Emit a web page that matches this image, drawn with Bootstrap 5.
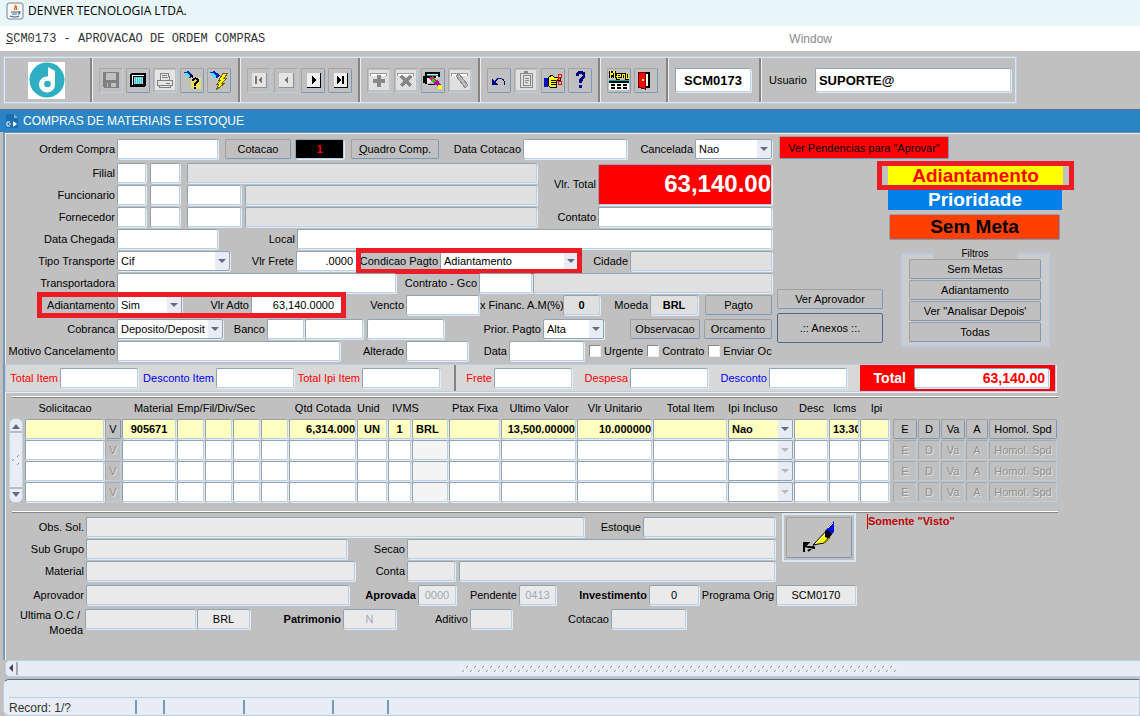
<!DOCTYPE html>
<html lang="pt-BR">
<head>
<meta charset="utf-8">
<meta name="viewport" content="width=device-width, initial-scale=1">
<title>DENVER TECNOLOGIA LTDA.</title>
<link href="https://cdn.jsdelivr.net/npm/bootstrap@5.3.0/dist/css/bootstrap.min.css" rel="stylesheet">
<style>
body{background:#c0c0c0;color:#000;font:11px/14px "Liberation Sans",Arial,sans-serif}
/* window chrome */
.titlebar{height:26px;background:#e8f6f8;padding:0 6px 4px;font:12px/18px "Open Sans","Noto Sans",sans-serif}
.menubar{height:25px;background:#fff;padding:0 6px;font:12px/16px "Liberation Mono",monospace;color:#333}
.menubar a{color:inherit;text-decoration:none}
.menubar .win{font:12px/16px "Liberation Sans",sans-serif;color:#8a8a8a;margin-right:302px}
.toolzone{padding:5px 3px;width:100%;max-width:1020px}
.toolbox{height:48px;border:1px solid #b8cfe5;outline:1px solid #dce6f0;outline-offset:-2px}
.sect{display:flex;align-items:center;gap:3px;border-right:2px solid #848484;box-shadow:1px 0 #eee;padding-left:7px;flex:none}
.s-logo{width:88px;padding-left:24px}.s-five{width:148px}.s-four{width:120px}.s-two{width:68px}.s-code{width:93px}
.tool{width:24px;height:25px;padding:1px;background:#c0c0c0;border:1px solid;border-color:#a3a3a3 #7a99b8 #7a99b8 #a3a3a3;border-radius:2px;display:flex;align-items:center;justify-content:center}
.tool:disabled{border-color:#aaa #b8cfe5 #b8cfe5 #aaa}
.tool svg{width:20px;height:20px;shape-rendering:crispEdges}
.formtitle{height:23px;background:#2b84c4;border-top:1px solid #50708c;color:#fff;font-size:12px;padding:0 5px}
/* canvas */
.canvas{border-left:2px solid #7a99b8;border-top:1px solid #7089a4;box-shadow:inset 1px 1px #eef3f8;margin-left:3px}
.upper{display:grid;grid-template-columns:minmax(0,1fr) 301px;width:100%;max-width:1069px;padding-top:5px}
.lower{width:100%;max-width:1053px}
.line{display:grid;align-items:center;height:22px}
.push{margin-bottom:2px}
.lb{text-align:right;padding-right:2px;white-space:nowrap;overflow:hidden;min-width:0}
.fld,.sel{min-width:0;width:auto;height:20px;padding:0 3px;font:inherit;color:#000;background-color:#fff;border:1px solid;border-color:#93a1b0 #b8cfe5 #b8cfe5 #93a1b0;border-radius:2px;box-shadow:1px 1px #e4edf6;margin-right:1px}
.fld:focus,.sel:focus{box-shadow:0 0 0 1px #39f;background-color:#fff}
.fld.off{background-color:#e0e0e0}.lower .fld.off{background-color:#eaeaea}.fld.dim{color:#9aabbd}
.fld.big{height:24px;font-size:13px;font-weight:700}
.sel{border-right-color:#93a1b0;border-bottom-color:#93a1b0;padding-right:14px;background:#fff right/14px 18px no-repeat;background-image:url("data:image/svg+xml,%3Csvg xmlns='http://www.w3.org/2000/svg' width='14' height='18'%3E%3Cpath fill='%23e8edf5' d='M0 0h14v18H0z'/%3E%3Cpath fill='%23646c80' d='M3 7h8l-4 4z'/%3E%3C/svg%3E")}
.sel:disabled{background-color:#fff;background-image:url("data:image/svg+xml,%3Csvg xmlns='http://www.w3.org/2000/svg' width='14' height='18'%3E%3Cpath fill='%23e8edf5' d='M0 0h14v18H0z'/%3E%3Cpath fill='%23b4b8c0' d='M3 7h8l-4 4z'/%3E%3C/svg%3E")}
.num{text-align:right}.mid{text-align:center}.strong{font-weight:700}
.key{height:20px;min-width:0;padding:0 1px;font:inherit;color:#000;background:#c0c0c0;border:1px solid;border-color:#a0a0a0 #7a99b8 #7a99b8 #a0a0a0;border-radius:2px;white-space:nowrap;margin-right:1px}
.key:disabled{color:#909090;text-shadow:1px 1px #e4e4e4;border-color:#a8a8a8 #b8cfe5 #b8cfe5 #a8a8a8}
.g3{margin-left:3px}.g6{margin-left:6px}.g24{margin-left:25px}
.l-order{grid-template-columns:112px minmax(0,1fr) 73px 53px 95px 83px 105px 67px 78px}
.pair{display:grid;grid-template-columns:minmax(0,1fr) 60px 175px;align-items:center}
.l-branch{grid-template-columns:112px 30px 34px minmax(0,1fr)}
.l-person{grid-template-columns:112px 30px 34px 61px minmax(0,1fr)}
.l-arrive{grid-template-columns:112px 102px 78px minmax(0,1fr)}
.l-type{grid-template-columns:112px 114px 65px 62px minmax(0,1fr) 50px 143px}
.l-carrier{grid-template-columns:112px minmax(0,1fr) 82px 54px 240px}
.l-advance{grid-template-columns:339px 62px 74px 83px 38px 49px 49px minmax(0,1fr)}
.l-billing{grid-template-columns:112px 107px 43px 38px 59px 81px 98px 62px 96px minmax(0,1fr)}
.l-reason{grid-template-columns:112px minmax(0,1fr) 65px 63px 40px 76px 188px}
.hot{display:grid;align-items:center;height:22px;outline:5px solid #ed1c24;outline-offset:-3px}
.hot-pay{grid-template-columns:82px minmax(0,1fr)}
.hot-adv{grid-template-columns:78px 66px 68px minmax(0,1fr);margin-left:34px}
.fld.sum{height:41px;background:#f00;color:#fff;font-size:24px;font-weight:700;padding:0}
.fld.lot{background:#000;color:#f00;font-weight:700}
.chk{appearance:none;width:12px;height:12px;margin:0 3px 0 0;background:#fff;border:1px solid;border-color:#888 #eee #eee #888;flex:none}
.chk:checked{background:#345}
/* right column */
.alerts{margin-left:104px;width:197px}
.flag{width:174px;margin-left:11px;text-align:center;font-size:19px;font-weight:700;line-height:20px;height:20px}
.prio{background:#0080e8;color:#fff}
.ring{border:5px solid #ed1c24;padding:0 6px;height:29px}
.ring .flag{margin:0;width:auto;background:#ff0;color:#f00;height:19px}
.nogoal{display:block;width:171px;height:26px;margin:4px 0 0 12px;font-size:19px;font-weight:700;background:#ff4000}
.pend{width:170px;height:23px;margin:-2px 0 2px 6px;background:#f00}
.sidekeys{width:107px;margin:49px 17px 0 4px}
.sidekeys .tall{height:30px;border-color:#4c6a94}
.filters{width:149px;height:98px;margin-top:9px;padding:0 9px 0 6px;background:#ccc;border:2px solid #bccbdc;border-radius:3px}
.filters legend{float:none;width:84px;margin:0 0 0 1px;padding:0;background:#c0c0c0;font-size:10px;line-height:10px;text-align:center}
.filters .key{display:block;width:132px;margin:0 0 1px;height:20px}
/* totals */
.totals{display:grid;grid-template-columns:54px minmax(0,1fr) 77px minmax(0,1fr) 67px minmax(0,1fr) 53px minmax(0,1fr) 57px minmax(0,1fr) 60px minmax(0,1fr) 207px;align-items:center;max-width:1051px;height:28px;margin-top:2px;border:1px solid #b8cfe5;background:#d8d8d8;box-shadow:1px 1px #e4edf6}
.totals .sep{border-left:2px solid #848484;margin-left:13px;line-height:26px}
.red{color:#f00}.blue{color:#00f}
.grand{height:26px;margin-left:12px;padding:0 5px 0 0;background:#f00;color:#fff;display:grid;grid-template-columns:54px minmax(0,1fr);align-items:center;font-size:14px;font-weight:700}
.grand .lb{padding-right:8px}.grand .fld{color:#f00}
.rule{height:2px;background:#848484;border-top:1px solid #fff;margin-left:7px}
/* item grid */
.items{table-layout:fixed;width:100%;border-collapse:collapse}
.items th{font-weight:400;text-align:center;height:20px;padding:0;white-space:nowrap}
.items td{padding:0 1px 0 0;height:21px}
.items .fld,.items .sel,.items .key{width:100%;display:block;margin:0}
.items .live .fld,.items .live .sel{background-color:#ffffc0;font-weight:700}
.items .cur{background-color:#f4f4f4}
.items td.wide{padding-right:4px}
.c-v{width:17px}.c-mat{width:55px}.c-org{width:28px}.c-qty{width:68px}.c-un{width:31px}.c-iv{width:24px}.c-cur{width:37px}.c-ptax{width:52px}.c-val{width:76px}.c-tot{width:75px}.c-inc{width:66px}.c-desc{width:35px}.c-ipi{width:33px}.c-key{width:25px}.c-kn{width:23px}.c-hom{width:69px}
.vbar{width:14px;height:85px;margin:20px 2px 0 4px;background:#e8edf5;border:1px solid #b8cfe5;border-radius:6px;flex:none}
.vbar svg{display:block;width:12px;height:83px}
/* details */
.det{display:grid;grid-template-columns:771px 80px minmax(0,1fr)}
.detrows{padding-top:3px}
.d-obs{grid-template-columns:81px minmax(0,1fr) 58px 133px}
.d-sub{grid-template-columns:81px 262px 59px minmax(0,1fr)}
.d-mat{grid-template-columns:81px 270px 51px 49px minmax(0,1fr)}
.d-apr{grid-template-columns:81px 264px 68px 39px 62px 38px 92px 51px 76px 81px;margin-top:2px}
.d-ult{grid-template-columns:80px 112px 54px 92px 54px 73px 43px 98px 76px;grid-template-rows:22px}
.ult{line-height:15px;height:30px;align-self:start}
.signbox{width:74px;height:49px;border:2px solid #dce7f2;margin:0 0 0 6px;padding:2px}
.signbox .key{width:100%;height:41px;margin:0}
.visto{color:#c00000;font-weight:700;border-left:1px solid #c00000;margin:1px 0 0 11px;height:15px}
.hbar{height:17px;margin:0 0 2px 5px;background:#e8edf5;border:1px solid #b8cfe5;border-right:0;border-radius:5px 0 0 5px}
.hbar .arrow{width:14px;height:15px;flex:none}
.hbar .grip{width:436px;height:8px;margin-left:39%}
.status{height:37px;background:#e8edf5;border:1px solid #b8cfe5;border-top:1px solid #50708c;border-radius:6px 0 0 6px;margin-left:3px;padding:17px 0 0 5px;font-size:12px;color:#333}
.status div{border-top:1px solid #b8cfe5}
.status i{border-left:2px solid #7a99b8;height:14px;margin-top:2px}
.st1{width:126px;padding-top:3px}.st2{width:28px}.st3{width:80px}.st4{width:89px}.st5{width:55px}
</style>
</head>
<body class="d-flex flex-column min-vh-100">
<header>
  <div class="titlebar d-flex align-items-center gap-1">
    <svg width="18" height="18" viewBox="0 0 18 18"><rect x="1" y="1" width="16" height="16" rx="2" fill="#f7f7f7" stroke="#77828c"/><path d="M9 3c2 2-2 3 0 5M11 4c-2 2 1 2-1 4" stroke="#e8731a" stroke-width="1.4" fill="none"/><path d="M5 10h7M6 12h5M12 10c3-1 2 2 0 2M4 14q5 2 9 0" stroke="#38658c" stroke-width="1.2" fill="none"/></svg>
    <span>DENVER TECNOLOGIA LTDA.</span>
  </div>
  <nav class="menubar d-flex align-items-center justify-content-between">
    <a href="#"><u>S</u>CM0173 - APROVACAO DE ORDEM COMPRAS</a><a href="#" class="win">Window</a>
  </nav>
</header>

<div class="toolzone">
  <div class="toolbox d-flex">
    <div class="sect s-logo"><svg width="37" height="37" viewBox="0 0 37 37"><path fill="#fff" d="M0 0h37v37H0z"/><circle cx="19" cy="18" r="17.500" fill="#2fafc2"/><path d="M20 5l7 4v13.500a8 8 0 1 1-7-7.900z" fill="#fff"/><circle cx="19.500" cy="22" r="3.300" fill="#2fafc2"/></svg></div>
    <div class="sect s-five">
      <button class="tool" disabled aria-label="Salvar"><svg viewBox="0 0 20 20"><path fill="#808080" d="M2 2h15l1 1v15H3l-1-1z"/><path fill="#c0c0c0" d="M5 3h10v7H5zM6 13h9v4H6z"/><path fill="#808080" d="M7 13h3v4H7z"/></svg></button>
      <button class="tool" aria-label="Tela"><svg viewBox="0 0 20 20"><rect x="3" y="4" width="14" height="12" rx="1" fill="#fff" stroke="#000" stroke-width="2"/><path d="M5 6h10v8H5z" fill="#9be6ea" stroke="#000"/><path d="M7 7v7M9 7v7M11 7v7M13 7v7" stroke="#39c4d0"/></svg></button>
      <button class="tool" disabled aria-label="Imprimir"><svg viewBox="0 0 20 20"><path fill="#e4e4e4" d="M0 0h20v20H0z"/><path d="M5 10V3h8l2 7M2 10h15v5H2zM4 15v2h11v-2M7 5h5M7 7h6M11 13h4" fill="none" stroke="#808080"/></svg></button>
      <button class="tool" aria-label="Consultar"><svg viewBox="0 0 20 20"><path d="M1 3l5-2 5 4-3 3z" fill="#0020c0"/><path d="M2 3l4 5 3-2-4-3z" fill="#40e8ff"/><path d="M8 5l3 2" stroke="#000" stroke-width="2"/><path d="M9 8h10v11H9z" fill="#e8e060"/><path d="M11 11c0-4 6-3 5 0l-3 3v2M13 17v2" fill="none" stroke="#000" stroke-width="2"/></svg></button>
      <button class="tool" aria-label="Executar consulta"><svg viewBox="0 0 20 20"><path d="M0 3l5-2 6 4-3 3z" fill="#0020c0"/><path d="M1 3l4 5 3-2-4-3z" fill="#40e8ff"/><path d="M14 3h5l-4 5h3l-5 5h3l-9 7 3-6H8l4-4h-2z" fill="#ff0" stroke="#706000"/></svg></button>
    </div>
    <div class="sect s-four">
      <button class="tool" disabled aria-label="Primeiro"><svg viewBox="0 0 20 20"><path fill="#e4e4e4" d="M3 3h14v14H3z"/><path d="M3 17h14V3" fill="none" stroke="#909090"/><path d="M6 6h2v8H6zM13 6v8l-4-4z" fill="#777"/></svg></button>
      <button class="tool" disabled aria-label="Anterior"><svg viewBox="0 0 20 20"><path fill="#e4e4e4" d="M3 3h14v14H3z"/><path d="M3 17h14V3" fill="none" stroke="#909090"/><path d="M12 6v8l-4-4z" fill="#777"/></svg></button>
      <button class="tool" aria-label="Proximo"><svg viewBox="0 0 20 20"><path fill="#eee" d="M4 3h13v14H4z"/><path d="M4 17h13V3" fill="none" stroke="#000"/><path d="M9 6v8l4-4z"/></svg></button>
      <button class="tool" aria-label="Ultimo"><svg viewBox="0 0 20 20"><path fill="#eee" d="M4 3h13v14H4z"/><path d="M4 17h13V3" fill="none" stroke="#000"/><path d="M7 6v8l4-4zM12 6h2v8h-2z"/></svg></button>
    </div>
    <div class="sect s-four">
      <button class="tool" disabled aria-label="Inserir"><svg viewBox="0 0 20 20"><path fill="#e0e0e0" d="M0 0h20v20H0z"/><path d="M1 6V3h16v3" fill="#fff" stroke="#999"/><path d="M8 5h4v4h4v4h-4v4H8v-4H4V9h4z" fill="#888"/></svg></button>
      <button class="tool" disabled aria-label="Remover"><svg viewBox="0 0 20 20"><path fill="#e0e0e0" d="M0 0h20v20H0z"/><path d="M1 6V3h16v3" fill="#fff" stroke="#999"/><path d="M5 6l10 10M15 6L5 16" stroke="#888" stroke-width="3"/></svg></button>
      <button class="tool" aria-label="Limpar"><svg viewBox="0 0 20 20"><path d="M3 14V3h13v4M1 13V7h12" fill="#e8e8e8" stroke="#000" stroke-width="2"/><path d="M4 5h11" stroke="#0aa"/><path d="M5 14h9" stroke="#000"/><path d="M6 8l4-2 5 6-3 3z" fill="#f02060"/><path d="M9 9h3v3H9z" fill="#0d0"/><path d="M11 13l4-3 3 5-3 2z" fill="#a000a0"/><path d="M15 15h4v4h-4z" fill="#ff0"/></svg></button>
      <button class="tool" disabled aria-label="Apagar"><svg viewBox="0 0 20 20"><path fill="#e0e0e0" d="M0 0h20v20H0z"/><path d="M1 6V3h16v3" fill="#fff" stroke="#999"/><path d="M6 6l3-2 9 11-3 3z" fill="#bbb" stroke="#888"/></svg></button>
    </div>
    <div class="sect s-four">
      <button class="tool" aria-label="Desfazer"><svg viewBox="0 0 20 20"><path d="M6 12c3-6 11-4 9 3" fill="none" stroke="#000080"/><path d="M3 9v6h6z" fill="#000080"/></svg></button>
      <button class="tool" disabled aria-label="Colar"><svg viewBox="0 0 20 20"><path fill="#e0e0e0" d="M0 0h20v20H0z"/><path d="M4 3h12v14H4zM7 5h7v10H7zM9 8h4M9 10h4M9 12h3" fill="none" stroke="#888"/><path d="M8 1h4v3H8z" fill="#888"/></svg></button>
      <button class="tool" aria-label="Recortar"><svg viewBox="0 0 20 20"><path d="M1 8h4v9H1z" fill="#0010c0"/><path d="M5 8l4-3 2 2h6v3h-4v7H7l-2-2z" fill="#ff0" stroke="#000"/><path d="M8 10h6M8 12h5M8 14h5" stroke="#000"/><circle cx="17" cy="6" r="2" fill="none" stroke="#f00"/><circle cx="17" cy="13" r="2" fill="none" stroke="#f00"/><path d="M13 11l4-3" stroke="#f00"/></svg></button>
      <button class="tool" aria-label="Ajuda"><svg viewBox="0 0 20 20"><path d="M7 6c0-5 8-5 7 0 0 3-4 2-4 7M10 15v3" fill="none" stroke="#000080" stroke-width="3"/></svg></button>
    </div>
    <div class="sect s-two">
      <button class="tool" aria-label="Menu"><svg viewBox="0 0 20 20"><path d="M0 10h20v10H0z" fill="#fff"/><path d="M0 10h20" stroke="#0aa" stroke-width="1"/><path d="M0 12h20M2 15h4M8 15h4M14 15h4M2 18h4M8 18h4M14 18h4" stroke="#000" stroke-width="2"/><path d="M1 8V1l2 4 2-4v7M7 6h4V4H8v4h3M13 8V4h2v4M17 4v4h2V4" fill="none" stroke="#000" stroke-width="3"/><path d="M1 8V1l2 4 2-4v7M7 6h4V4H8v4h3M13 8V4h2v4M17 4v4h2V4" fill="none" stroke="#ff0"/></svg></button>
      <button class="tool" aria-label="Sair"><svg viewBox="0 0 20 20"><path d="M3 3h10v14H3z" fill="#fff" stroke="#000" stroke-width="2"/><path d="M2 2h7v17l-7-2z" fill="#f00" stroke="#600"/><path d="M6 9h2v2H6z" fill="#ff0"/></svg></button>
    </div>
    <div class="sect s-code"><input class="fld big mid w-100 me-2" value="SCM0173" aria-label="Programa"></div>
    <div class="d-flex align-items-center flex-grow-1 ps-1 pe-1">
      <label for="usr" class="ms-1 me-2">Usuario</label><input id="usr" class="fld big flex-grow-1" value="SUPORTE@">
    </div>
  </div>
</div>

<div class="formtitle d-flex align-items-center gap-1">
  <svg width="14" height="16" viewBox="0 0 14 16"><path d="M1 1h8l4 4v10H1z" fill="#1b6fae"/><path d="M9 1l4 4H9z" fill="#79b4dc"/><path d="M5 9H2v4h3M4 11h2" stroke="#fff" fill="none"/><path d="M8 8l4 3-4 3z" fill="#fff"/></svg>
  <span>COMPRAS DE MATERIAIS E ESTOQUE</span>
</div>

<main class="canvas flex-grow-1 d-flex flex-column">
<div class="upper">
  <div>
    <div class="line l-order push">
      <label class="lb" for="oc">Ordem Compra</label><input id="oc" class="fld">
      <button class="key g6">Cotacao</button><input class="fld lot mid g3" value="1" aria-label="Numero da cotacao">
      <button class="key g6"><u>Q</u>uadro Comp.</button>
      <label class="lb" for="dc">Data Cotacao</label><input id="dc" class="fld">
      <label class="lb" for="cn">Cancelada</label><select id="cn" class="form-select sel"><option>Nao</option></select>
    </div>
    <div class="pair">
      <div>
        <div class="line l-branch"><label class="lb" for="fi">Filial</label><input id="fi" class="fld"><input class="fld g3" aria-label="Filial 2"><input class="fld off g6" readonly aria-label="Nome filial"></div>
        <div class="line l-person"><label class="lb" for="fu">Funcionario</label><input id="fu" class="fld"><input class="fld g3" aria-label="Funcionario 2"><input class="fld g6" aria-label="Funcionario 3"><input class="fld off g3" readonly aria-label="Nome funcionario"></div>
      </div>
      <label class="lb" for="vt">Vlr. Total</label><input id="vt" class="fld sum num" value="63,140.00">
    </div>
    <div class="pair">
      <div class="line l-person"><label class="lb" for="fo">Fornecedor</label><input id="fo" class="fld"><input class="fld g3" aria-label="Fornecedor 2"><input class="fld g6" aria-label="Fornecedor 3"><input class="fld off g3" readonly aria-label="Nome fornecedor"></div>
      <label class="lb" for="ct">Contato</label><input id="ct" class="fld">
    </div>
    <div class="line l-arrive"><label class="lb" for="dg">Data Chegada</label><input id="dg" class="fld"><label class="lb" for="lo">Local</label><input id="lo" class="fld"></div>
    <div class="line l-type">
      <label class="lb" for="tt">Tipo Transporte</label><select id="tt" class="form-select sel"><option>Cif</option></select>
      <label class="lb" for="vf">Vlr Frete</label><input id="vf" class="fld num" value=".0000">
      <div class="hot hot-pay"><label class="lb" for="cp">Condicao Pagto</label><select id="cp" class="form-select sel"><option>Adiantamento</option></select></div>
      <label class="lb" for="ci">Cidade</label><input id="ci" class="fld off" readonly>
    </div>
    <div class="line l-carrier"><label class="lb" for="tr">Transportadora</label><input id="tr" class="fld"><label class="lb" for="cg">Contrato - Gco</label><input id="cg" class="fld"><input class="fld off" readonly aria-label="Descricao contrato"></div>
    <div class="line l-advance push">
      <div class="hot hot-adv"><label class="lb" for="ad">Adiantamento</label><select id="ad" class="form-select sel"><option>Sim</option></select><label class="lb" for="va">Vlr Adto</label><input id="va" class="fld num pe-2" value="63,140.0000"></div>
      <label class="lb" for="ve">Vencto</label><input id="ve" class="fld">
      <label class="lb" for="tx">x Financ. A.M(%)</label><input id="tx" class="fld off mid strong" value="0">
      <label class="lb" for="mo">Moeda</label><input id="mo" class="fld off mid strong" value="BRL"><button class="key g6">Pagto</button>
    </div>
    <div class="line l-billing">
      <label class="lb" for="co">Cobranca</label><select id="co" class="form-select sel"><option>Deposito/Deposit</option></select>
      <label class="lb" for="ba">Banco</label><input id="ba" class="fld"><input class="fld" aria-label="Agencia"><input class="fld g3" aria-label="Conta corrente">
      <label class="lb" for="pp">Prior. Pagto</label><select id="pp" class="form-select sel"><option>Alta</option></select>
      <button class="key g24">Observacao</button><button class="key g3">Orcamento</button>
    </div>
    <div class="line l-reason">
      <label class="lb" for="mc">Motivo Cancelamento</label><input id="mc" class="fld"><label class="lb" for="al">Alterado</label><input id="al" class="fld"><label class="lb" for="da">Data</label><input id="da" class="fld">
      <div class="d-flex align-items-center ps-1 text-nowrap"><input type="checkbox" class="chk" id="k1"><label for="k1" class="me-1">Urgente</label><input type="checkbox" class="chk" id="k2"><label for="k2" class="me-1">Contrato</label><input type="checkbox" class="chk" id="k3"><label for="k3">Enviar Oc</label></div>
    </div>
  </div>
  <div>
    <button class="key pend">Ver Pendencias para "Aprovar"</button>
    <div class="alerts">
      <div class="ring"><div class="flag">Adiantamento</div></div>
      <div class="flag prio">Prioridade</div>
      <button class="key nogoal">Sem Meta</button>
    </div>
    <div class="d-flex">
      <div class="sidekeys d-flex flex-column gap-1"><button class="key">Ver Aprovador</button><button class="key tall">.:: Anexos ::.</button></div>
      <fieldset class="filters"><legend>Filtros</legend><button class="key">Sem Metas</button><button class="key">Adiantamento</button><button class="key">Ver "Analisar Depois'</button><button class="key">Todas</button></fieldset>
    </div>
  </div>
</div>

<div class="lower">
  <div class="totals">
    <label class="lb red" for="t1">Total Item</label><input id="t1" class="fld"><label class="lb blue" for="t2">Desconto Item</label><input id="t2" class="fld"><label class="lb red" for="t3">Total Ipi Item</label><input id="t3" class="fld">
    <label class="lb red sep" for="t4">Frete</label><input id="t4" class="fld"><label class="lb red" for="t5">Despesa</label><input id="t5" class="fld"><label class="lb blue" for="t6">Desconto</label><input id="t6" class="fld">
    <div class="grand"><label class="lb" for="t7">Total</label><input id="t7" class="fld num" value="63,140.00"></div>
  </div>
  <div class="rule mt-1"></div>
  <div class="d-flex">
    <div class="vbar"><svg viewBox="0 0 12 83"><path d="M2 10h8L6 5zM2 73h8l-4 5z" fill="#646c80"/><path d="M0 13h12M0 69h12" stroke="#888"/><path d="M2 42l2-2M7 38l2-2M7 46l2-2" stroke="#7a99b8"/></svg></div>
    <table class="items">
      <colgroup><col><col class="c-v"><col class="c-mat"><col class="c-org" span="4"><col class="c-qty"><col class="c-un"><col class="c-iv"><col class="c-cur"><col class="c-ptax"><col class="c-val" span="2"><col class="c-tot"><col class="c-inc"><col class="c-desc"><col class="c-un"><col class="c-ipi"><col class="c-key"><col class="c-kn"><col class="c-key"><col class="c-kn"><col class="c-hom"></colgroup>
      <thead><tr><th>Solicitacao</th><th></th><th class="text-end pe-1">Material</th><th colspan="4" class="text-start">Emp/Fil/Div/Sec</th><th>Qtd Cotada</th><th class="text-start">Unid</th><th colspan="2" class="text-start ps-1">IVMS</th><th>Ptax Fixa</th><th>Ultimo Valor</th><th>Vlr Unitario</th><th>Total Item</th><th class="text-start">Ipi Incluso</th><th>Desc</th><th class="text-start ps-1">Icms</th><th>Ipi</th><th colspan="5"></th></tr></thead>
      <tbody>
      <tr class="live"><td><input class="fld" aria-label="Solicitacao"></td><td><button class="key">V</button></td><td><input class="fld mid" value="905671" aria-label="Material"></td><td><input class="fld" aria-label="Emp"></td><td><input class="fld" aria-label="Fil"></td><td><input class="fld" aria-label="Div"></td><td><input class="fld" aria-label="Sec"></td><td><input class="fld num px-0" value="6,314.000" aria-label="Qtd"></td><td><input class="fld mid" value="UN" aria-label="Unid"></td><td><input class="fld mid" value="1" aria-label="IVMS"></td><td><input class="fld" value="BRL" aria-label="Moeda"></td><td><input class="fld" aria-label="Ptax"></td><td><input class="fld num px-0" value="13,500.00000" aria-label="Ultimo Valor"></td><td><input class="fld num px-0" value="10.000000" aria-label="Vlr Unitario"></td><td><input class="fld" aria-label="Total"></td><td><select class="form-select sel" aria-label="Ipi Incluso"><option>Nao</option></select></td><td><input class="fld" aria-label="Desc"></td><td><input class="fld pe-0" value="13.3000" aria-label="Icms"></td><td class="wide"><input class="fld" aria-label="Ipi"></td><td><button class="key">E</button></td><td><button class="key">D</button></td><td><button class="key">Va</button></td><td><button class="key">A</button></td><td><button class="key">Homol. Spd</button></td></tr>
      <tr><td><input class="fld" aria-label="Solicitacao"></td><td><button class="key" disabled>V</button></td><td><input class="fld" aria-label="Material"></td><td><input class="fld" aria-label="Emp"></td><td><input class="fld" aria-label="Fil"></td><td><input class="fld" aria-label="Div"></td><td><input class="fld" aria-label="Sec"></td><td><input class="fld" aria-label="Qtd"></td><td><input class="fld" aria-label="Unid"></td><td><input class="fld" aria-label="IVMS"></td><td><input class="fld cur" aria-label="Moeda"></td><td><input class="fld" aria-label="Ptax"></td><td><input class="fld" aria-label="Ultimo Valor"></td><td><input class="fld" aria-label="Vlr Unitario"></td><td><input class="fld" aria-label="Total"></td><td><select class="form-select sel" disabled aria-label="Ipi Incluso"></select></td><td><input class="fld" aria-label="Desc"></td><td><input class="fld" aria-label="Icms"></td><td class="wide"><input class="fld" aria-label="Ipi"></td><td><button class="key" disabled>E</button></td><td><button class="key" disabled>D</button></td><td><button class="key" disabled>Va</button></td><td><button class="key" disabled>A</button></td><td><button class="key" disabled>Homol. Spd</button></td></tr>
      <tr><td><input class="fld" aria-label="Solicitacao"></td><td><button class="key" disabled>V</button></td><td><input class="fld" aria-label="Material"></td><td><input class="fld" aria-label="Emp"></td><td><input class="fld" aria-label="Fil"></td><td><input class="fld" aria-label="Div"></td><td><input class="fld" aria-label="Sec"></td><td><input class="fld" aria-label="Qtd"></td><td><input class="fld" aria-label="Unid"></td><td><input class="fld" aria-label="IVMS"></td><td><input class="fld cur" aria-label="Moeda"></td><td><input class="fld" aria-label="Ptax"></td><td><input class="fld" aria-label="Ultimo Valor"></td><td><input class="fld" aria-label="Vlr Unitario"></td><td><input class="fld" aria-label="Total"></td><td><select class="form-select sel" disabled aria-label="Ipi Incluso"></select></td><td><input class="fld" aria-label="Desc"></td><td><input class="fld" aria-label="Icms"></td><td class="wide"><input class="fld" aria-label="Ipi"></td><td><button class="key" disabled>E</button></td><td><button class="key" disabled>D</button></td><td><button class="key" disabled>Va</button></td><td><button class="key" disabled>A</button></td><td><button class="key" disabled>Homol. Spd</button></td></tr>
      <tr><td><input class="fld" aria-label="Solicitacao"></td><td><button class="key" disabled>V</button></td><td><input class="fld" aria-label="Material"></td><td><input class="fld" aria-label="Emp"></td><td><input class="fld" aria-label="Fil"></td><td><input class="fld" aria-label="Div"></td><td><input class="fld" aria-label="Sec"></td><td><input class="fld" aria-label="Qtd"></td><td><input class="fld" aria-label="Unid"></td><td><input class="fld" aria-label="IVMS"></td><td><input class="fld cur" aria-label="Moeda"></td><td><input class="fld" aria-label="Ptax"></td><td><input class="fld" aria-label="Ultimo Valor"></td><td><input class="fld" aria-label="Vlr Unitario"></td><td><input class="fld" aria-label="Total"></td><td><select class="form-select sel" disabled aria-label="Ipi Incluso"></select></td><td><input class="fld" aria-label="Desc"></td><td><input class="fld" aria-label="Icms"></td><td class="wide"><input class="fld" aria-label="Ipi"></td><td><button class="key" disabled>E</button></td><td><button class="key" disabled>D</button></td><td><button class="key" disabled>Va</button></td><td><button class="key" disabled>A</button></td><td><button class="key" disabled>Homol. Spd</button></td></tr>
      </tbody>
    </table>
  </div>
  <div class="rule mt-2"></div>
  <div class="det">
    <div class="detrows">
      <div class="line d-obs"><label class="lb" for="ob">Obs. Sol.</label><input id="ob" class="fld off" readonly><label class="lb" for="es">Estoque</label><input id="es" class="fld off" readonly></div>
      <div class="line d-sub"><label class="lb" for="sg">Sub Grupo</label><input id="sg" class="fld off" readonly><label class="lb" for="se">Secao</label><input id="se" class="fld off" readonly></div>
      <div class="line d-mat"><label class="lb" for="ma">Material</label><input id="ma" class="fld off" readonly><label class="lb" for="cc">Conta</label><input id="cc" class="fld off" readonly><input class="fld off g3" readonly aria-label="Nome conta"></div>
    </div>
    <div class="signbox"><button class="key" aria-label="Assinar"><svg width="36" height="36" viewBox="0 0 36 36"><path d="M3 32v-9h4l-4 4M3 26l11 2M7 31l6-5" stroke="#000" stroke-width="2" fill="none"/><path d="M12 25l14-15 4 5-7 8z" fill="#ff0" stroke="#000"/><path d="M14 24l12-12" stroke="#fff"/><path d="M23 23l6-6" stroke="#888800" stroke-width="2"/><path d="M24 11l9-10v11l-7 7z" fill="#0010e0"/><path d="M24 11l3-1 4 4-3 4-4-1z" fill="#000"/><path d="M27 8l5-5" stroke="#fff"/></svg></button></div>
    <div class="visto">Somente "Visto"</div>
  </div>
  <div class="line d-apr push">
    <label class="lb" for="ap">Aprovador</label><input id="ap" class="fld off" readonly><label class="lb strong" for="av">Aprovada</label><input id="av" class="fld off dim mid" value="0000" readonly>
    <label class="lb" for="pe">Pendente</label><input id="pe" class="fld off dim mid" value="0413" readonly><label class="lb strong" for="iv">Investimento</label><input id="iv" class="fld off mid" value="0" readonly>
    <label class="lb" for="po">Programa Orig</label><input id="po" class="fld off mid" value="SCM0170" readonly>
  </div>
  <div class="line d-ult">
    <label class="lb ult" for="ul">Ultima O.C /&nbsp;<br>Moeda</label><input id="ul" class="fld off" readonly><input class="fld off mid" value="BRL" readonly aria-label="Moeda da ultima O.C">
    <label class="lb strong" for="pa">Patrimonio</label><input id="pa" class="fld off dim mid" value="N" readonly><label class="lb" for="at">Aditivo</label><input id="at" class="fld off" readonly><label class="lb" for="cq">Cotacao</label><input id="cq" class="fld off" readonly>
  </div>
</div>
</main>
<div class="hbar d-flex align-items-center">
  <svg class="arrow" viewBox="0 0 14 15"><path d="M7 3v8L3 7z" fill="#445"/><path d="M11 1v13" stroke="#666"/></svg>
  <svg class="grip"><defs><pattern id="dots" width="8" height="8" patternUnits="userSpaceOnUse"><path d="M4 3l2-2M0 7l2-2" stroke="#7a99b8"/><path d="M5 4l2-2M1 8l2-2" stroke="#fff"/></pattern></defs><rect width="436" height="8" fill="url(#dots)"/></svg>
</div>
<footer class="status"><div class="d-flex"><span class="st1">Record: 1/?</span><i class="st2"></i><i class="st3"></i><i class="st4"></i><i class="st5"></i><i></i></div></footer>
<script src="https://cdn.jsdelivr.net/npm/bootstrap@5.3.0/dist/js/bootstrap.bundle.min.js"></script>
</body>
</html>
